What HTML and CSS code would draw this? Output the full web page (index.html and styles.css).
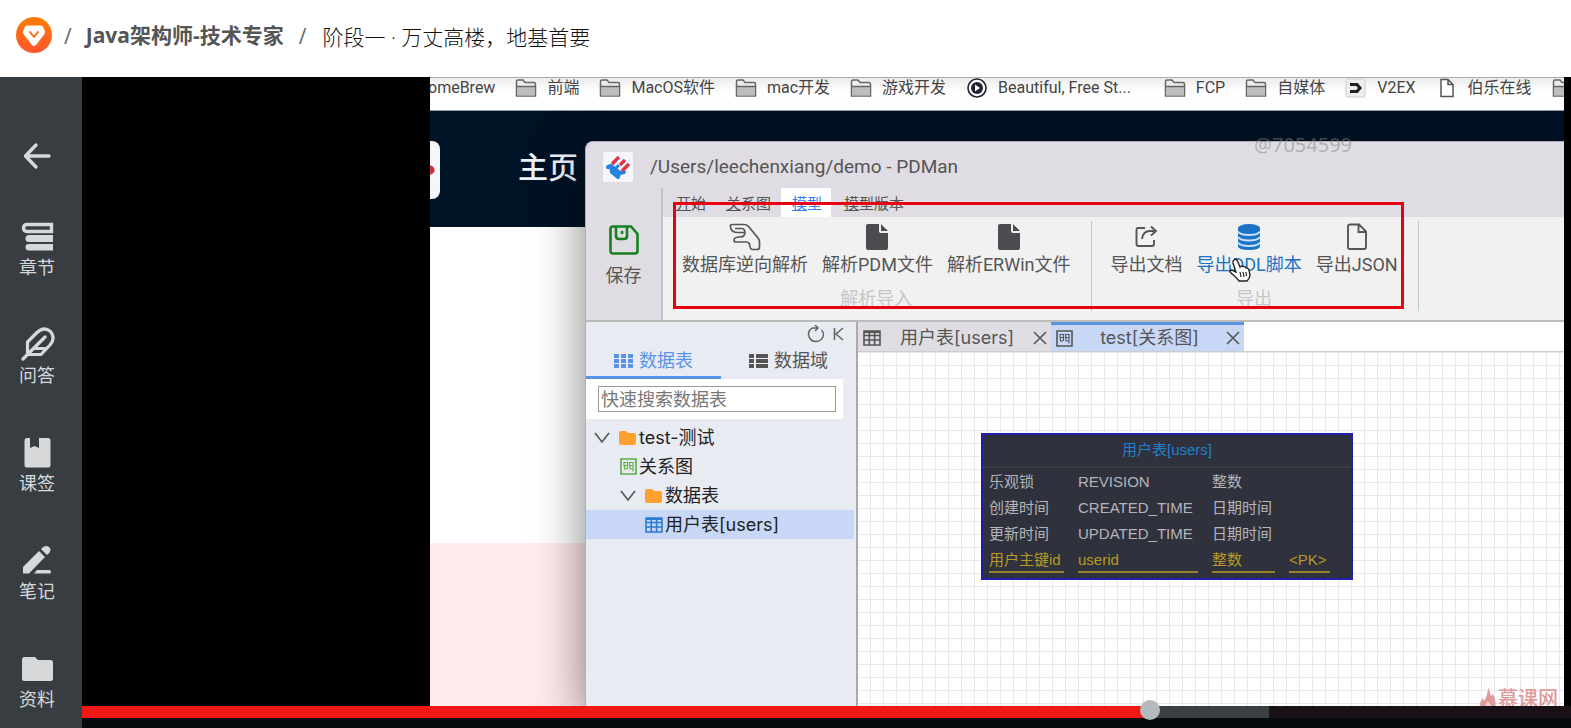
FILE: index.html
```html
<!DOCTYPE html>
<html lang="zh-CN">
<head>
<meta charset="utf-8">
<title>Java架构师-技术专家</title>
<link rel="stylesheet" href="styles.css">
</head>
<body>
<svg class="defs" width="0" height="0" aria-hidden="true">
  <symbol id="bm-folder" viewBox="0 0 22 20"><path d="M1.5 18V3.5Q1.5 2 3 2H8L10 4.5H19Q20.5 4.5 20.5 6V18Z" fill="#ececec" stroke="#666" stroke-width="1.5"/><path d="M2 8.5H20V17.500H2Z" fill="#bdbdbd"/><path d="M1.500 8.500H20.500" stroke="#666" stroke-width="1.500"/></symbol>
  <symbol id="doc-solid" viewBox="0 0 26 28"><path d="M2 3Q2 1 4 1H15V8Q15 10 17 10H24V25Q24 27 22 27H4Q2 27 2 25ZM17 1L24 8H17Z" fill="#4d4b4f"/></symbol>
  <symbol id="folder" viewBox="0 0 18 16"><path d="M0 3Q0 1 2 1H7L9 3H15Q17 3 17 5V13Q17 15 15 15H2Q0 15 0 13Z" fill="#ffa02f"/></symbol>
  <symbol id="chevron" viewBox="0 0 16 12"><path d="M1 1L8 10L15 1" fill="none" stroke="#555" stroke-width="1.600"/></symbol>
  <symbol id="close" viewBox="0 0 14 14"><path d="M1 1L13 13M13 1L1 13" fill="none" stroke="#555" stroke-width="1.600"/></symbol>
  <symbol id="table" viewBox="0 0 18 16"><path d="M1 1H17V15H1ZM1 5.500H17M1 10H17M6.300 1V15M11.600 1V15" fill="none" stroke="currentColor" stroke-width="1.600"/><path d="M1 1H17V3H1Z" fill="currentColor"/></symbol>
  <symbol id="diagram" viewBox="0 0 17 17"><path d="M1 1H16V16H1Z" fill="none" stroke="currentColor" stroke-width="1.600"/><path d="M4 4.500H7.500V7.500H4ZM9.500 4.500H13V7.500H9.500ZM4.500 8V11H7M7.500 8V11M10 8V11H13M13 8V13.500" fill="none" stroke="currentColor" stroke-width="1.100"/></symbol>
</svg>

<header class="course-bar">
  <a href="#" class="logo" aria-label="首页"><svg width="36" height="36" viewBox="0 0 36 36"><defs><linearGradient id="lg" x1="0" y1="0" x2="0" y2="1"><stop offset="0" stop-color="#ff7d00"/><stop offset="1" stop-color="#ff5530"/></linearGradient></defs><circle cx="18" cy="18" r="18" fill="url(#lg)"/><path d="M11 8.500H25Q26.500 8.500 27.200 10L28.800 14Q29.300 15.500 28.500 17L20 28Q18 30 16 28L7.500 17Q6.700 15.500 7.200 14L8.800 10Q9.500 8.500 11 8.500Z" fill="#fff"/><path d="M14 15L18 20L22 15" fill="none" stroke="#ff6a18" stroke-width="2" stroke-linecap="round" stroke-linejoin="round"/></svg></a>
  <span class="slash">/</span>
  <a href="#" class="course">Java架构师-技术专家</a>
  <span class="slash">/</span>
  <h1 class="stage-name">阶段一 · 万丈高楼，地基首要</h1>
</header>

<div class="player">
  <nav class="rail">
    <button class="rail-item back" aria-label="返回"><svg width="36" height="36" viewBox="0 0 36 36"><path d="M30 18H7M17 7L6.500 18L17 29" fill="none" stroke="currentColor" stroke-width="3.400" stroke-linecap="round" stroke-linejoin="round"/></svg></button>
    <button class="rail-item"><svg width="36" height="36" viewBox="0 0 36 36"><path d="M32.500 5.500H8Q4.500 5.500 4.500 9T8 12.500H32.500Z" fill="none" stroke="currentColor" stroke-width="3.400"/><path d="M10 16H34V23H10Q6.500 23 6.500 19.500T10 16ZM10 25H34V31.500H10Q6.500 31.500 6.500 28.200T10 25Z" fill="currentColor"/></svg>章节</button>
    <button class="rail-item"><svg width="36" height="36" viewBox="0 0 36 36"><path d="M4 32L26 10M8.500 28V15L18 5.500Q25 -1 31.500 4.500Q37 11 31 18L22 27.500H9M16 21.500H27" fill="none" stroke="currentColor" stroke-width="3.200" stroke-linecap="round" stroke-linejoin="round"/></svg>问答</button>
    <button class="rail-item"><svg width="36" height="36" viewBox="0 -2 36 36"><path d="M8 1H11V11L15.500 9L20 11V1H29Q31.500 1 31.500 3.500V28Q31.500 30.500 29 30.500H8Q5.500 30.500 5.500 28V3.500Q5.500 1 8 1Z" fill="currentColor"/></svg>课签</button>
    <button class="rail-item"><svg width="36" height="36" viewBox="0 -2 36 36"><path d="M4 22L20 6L26 12L10 28.500H4ZM22 4Q26 -1 30 2Q34 5 28 10ZM18 25H30Q32 25 32 27T30 28.500H15Z" fill="currentColor"/></svg>笔记</button>
    <button class="rail-item"><svg width="36" height="36" viewBox="0 -5 36 36"><path d="M5.500 1H16L19 4H31.500Q34 4 34 6.500V22.500Q34 25 31.500 25H5.500Q3 25 3 22.500V3.500Q3 1 5.500 1Z" fill="currentColor"/></svg>资料</button>
  </nav>

  <main class="screen">
    <div class="video">
      <div class="desktop">
        <div class="bookmarks">
          <span class="bm bm-first">omeBrew</span>
          <span class="bm"><svg width="22" height="20"><use href="#bm-folder"/></svg>前端</span>
          <span class="bm"><svg width="22" height="20"><use href="#bm-folder"/></svg>MacOS软件</span>
          <span class="bm"><svg width="22" height="20"><use href="#bm-folder"/></svg>mac开发</span>
          <span class="bm"><svg width="22" height="20"><use href="#bm-folder"/></svg>游戏开发</span>
          <span class="bm"><svg width="22" height="20" viewBox="0 0 22 20"><circle cx="11" cy="10" r="9" fill="#fff" stroke="#1d2235" stroke-width="1.600"/><circle cx="11" cy="10" r="6" fill="#1d2235"/><path d="M9 6.500L14 10L9 13.500Z" fill="#fff"/></svg>Beautiful, Free St...</span>
          <span class="bm bm-far"><svg width="22" height="20"><use href="#bm-folder"/></svg>FCP</span>
          <span class="bm"><svg width="22" height="20"><use href="#bm-folder"/></svg>自媒体</span>
          <span class="bm"><svg width="22" height="20" viewBox="0 0 22 20"><rect x="1" y="1" width="19" height="18" rx="2" fill="#eee" stroke="#ccc"/><path d="M5 6.500H12L15 10L12 13.500H5" fill="none" stroke="#222" stroke-width="3"/></svg>V2EX</span>
          <span class="bm"><svg width="22" height="20" viewBox="0 0 22 20"><path d="M5 1.500H12L17 6.500V18.500H5ZM12 1.500V6.500H17" fill="#fff" stroke="#555" stroke-width="1.500"/></svg>伯乐在线</span>
          <span class="bm"><svg width="22" height="20"><use href="#bm-folder"/></svg></span>
        </div>
        <div class="site-nav"><span class="site-card"></span><span class="site-home">主页</span></div>
        <div class="site-white"></div>
        <div class="site-pink"></div>
      </div>

      <section class="window">
        <header class="titlebar">
          <svg width="30" height="30" viewBox="0 0 30 30"><rect width="30" height="30" rx="2" fill="#f5f6fb"/><path d="M5 15L8 14L17 21L21 20M8 14L9 20L15 25L16 21M11 18L15 22" fill="none" stroke="#2482e0" stroke-width="4" stroke-linejoin="round" stroke-linecap="round"/><path d="M9 12L16 5M19 19L26 12" stroke="#d93646" stroke-width="3.400"/><path d="M13 16L16 13" stroke="#2482e0" stroke-width="3"/><path d="M17 13L22 8" stroke="#d93646" stroke-width="3.400"/></svg>
          <span>/Users/leechenxiang/demo - PDMan</span>
        </header>
        <div class="ribbon">
          <button class="save"><svg width="30" height="30" viewBox="0 0 30 30"><path d="M4 1.500H22L28.500 9V26Q28.500 28.500 26 28.500H4Q1.500 28.500 1.500 26V4Q1.500 1.500 4 1.500ZM7 2V11Q7 14 10 14H15Q18 14 18 11V2M13 6V9" fill="none" stroke="#16801c" stroke-width="2.600"/></svg>保存</button>
          <div class="ribbon-main">
            <div class="ribbon-tabs">
              <button class="rtab"><u>开</u>始</button><button class="rtab"><u>关</u>系图</button><button class="rtab on"><u>模</u>型</button><button class="rtab"><u>模</u>型版本</button>
            </div>
            <div class="groups">
              <div class="group">
                <div class="tools">
                  <button class="tool"><svg width="32" height="28" viewBox="0 0 32 28"><path d="M3 1.500H15Q18 1.500 20 4L29 15Q30.500 17 30.500 19V24Q30.500 26.500 28 26.500H23Q21 26 20.500 21Q20 19 17 19H7Q5 19 5 17T7 14.500L13 13.500M15 9.500H8Q2 9 1.500 4Q1 1.500 3 1.500M6 5.500H13Q16 6 16 10Q15 14 12 14" fill="none" stroke="#555" stroke-width="1.700"/></svg>数据库逆向解析</button>
                  <button class="tool"><svg width="26" height="28"><use href="#doc-solid"/></svg>解析PDM文件</button>
                  <button class="tool"><svg width="26" height="28"><use href="#doc-solid"/></svg>解析ERWin文件</button>
                </div>
                <div class="group-name">解析导入</div>
              </div>
              <div class="group">
                <div class="tools">
                  <button class="tool"><svg width="26" height="28" viewBox="0 0 26 28"><path d="M11 5H4Q2.500 5 2.500 7V21Q2.500 23 4.500 23H18Q20 23 20 21V17M8 16Q9 8 16 8H20M17 3.500L22 8L17 12.500" fill="none" stroke="#555" stroke-width="1.900"/></svg>导出文档</button>
                  <button class="tool hot"><svg width="26" height="28" viewBox="0 0 26 28"><path d="M2 5V23Q2 27 13 27T24 23V5Z" fill="#1c73c4"/><ellipse cx="13" cy="5" rx="11" ry="4" fill="#1c73c4"/><path d="M2 8.500Q4 12 13 12T24 8.500M2 14Q4 17.500 13 17.500T24 14M2 19.500Q4 23 13 23T24 19.500" fill="none" stroke="#c5e0fa" stroke-width="1.800"/></svg>导出DDL脚本</button>
                  <button class="tool"><svg width="26" height="28" viewBox="0 0 26 28"><path d="M6 1.500H15L22 8.500V24Q22 26 20 26H6Q4 26 4 24V3.500Q4 1.500 6 1.500ZM14.500 2V9H21.500" fill="none" stroke="#555" stroke-width="1.900"/></svg>导出JSON</button>
                </div>
                <div class="group-name">导出</div>
              </div>
            </div>
          </div>
        </div>

        <div class="workspace">
          <aside class="explorer">
            <div class="explorer-actions">
              <svg width="18" height="18" viewBox="0 0 18 18"><path d="M5 3Q1 6 1.500 10Q3 16.500 9 16.500Q15.500 16 16.500 10Q16.500 7 14.500 5M5 3H10M8 0L11 3L8 6" fill="none" stroke="#666" stroke-width="1.500"/></svg>
              <svg width="12" height="14" viewBox="0 0 12 14"><path d="M1.500 1V13M10 1L3 7L10 13" fill="none" stroke="#666" stroke-width="1.600"/></svg>
            </div>
            <div class="explorer-tabs">
              <button class="etab on"><svg width="19" height="16" viewBox="0 0 19 16"><path d="M0 3H19M0 8H19M0 13H19" stroke="currentColor" stroke-width="3.800" stroke-dasharray="5 2"/></svg>数据表</button>
              <button class="etab"><svg width="19" height="16" viewBox="0 0 19 16"><path d="M0 3H5M7 3H19M0 8H5M7 8H19M0 13H5M7 13H19" stroke="currentColor" stroke-width="3.800"/></svg>数据域</button>
            </div>
            <div class="search"><input type="text" placeholder="快速搜索数据表" aria-label="快速搜索数据表"></div>
            <ul class="tree">
              <li class="node"><svg width="16" height="12"><use href="#chevron"/></svg><svg class="fold" width="18" height="16"><use href="#folder"/></svg>test-测试</li>
              <li class="node l2"><svg class="green" width="17" height="17"><use href="#diagram"/></svg>关系图</li>
              <li class="node l2"><svg width="16" height="12"><use href="#chevron"/></svg><svg class="fold" width="18" height="16"><use href="#folder"/></svg>数据表</li>
              <li class="node l3 selected"><svg class="blue" width="18" height="16"><use href="#table"/></svg>用户表[users]</li>
            </ul>
          </aside>

          <div class="editor">
            <div class="doc-tabs">
              <div class="doc-tab"><svg width="18" height="16"><use href="#table"/></svg><span>用户表[users]</span><button class="x" aria-label="关闭"><svg width="14" height="14"><use href="#close"/></svg></button></div>
              <div class="doc-tab on"><svg width="17" height="17"><use href="#diagram"/></svg><span>test[关系图]</span><button class="x" aria-label="关闭"><svg width="14" height="14"><use href="#close"/></svg></button></div>
            </div>
            <div class="canvas">
              <table class="entity">
                <caption>用户表[users]</caption>
                <tr><td>乐观锁</td><td>REVISION</td><td>整数</td><td></td></tr>
                <tr><td>创建时间</td><td>CREATED_TIME</td><td>日期时间</td><td></td></tr>
                <tr><td>更新时间</td><td>UPDATED_TIME</td><td>日期时间</td><td></td></tr>
                <tr class="pk"><td><div>用户主键id</div></td><td><div>userid</div></td><td><div>整数</div></td><td><div>&lt;PK&gt;</div></td></tr>
              </table>
            </div>
          </div>
        </div>
      </section>

      <div class="highlight"></div>
      <svg class="hand" width="22" height="24" viewBox="0 0 22 24"><path d="M5 2Q7 0 8.500 3L11 9Q12 7.500 14 8.500Q16 8 17 10Q19 9.500 20 12L21 17Q21 20 18 23H10Q8 20 2 15Q0 12 3 12L7 14L4 5Q3.500 3 5 2Z" fill="#fff" stroke="#222" stroke-width="1.400"/><path d="M11 14L12 19M14 14L15 19M17 14L17.500 18" stroke="#222" stroke-width="1.200"/></svg>
      <span class="viewer-id">@7054599</span>
      <div class="brand"><svg width="16" height="24" viewBox="0 0 16 24"><path d="M8 0Q10 5 11 9L13 7Q17 15 15 20Q13 24 8 24Q1 24 0 17Q0 14 3 11L4 14Q8 8 8 0Z" fill="#e09a9a"/><path d="M8 24Q4 19 8 14Q9 17 11 18Q12 21 10 24Z" fill="#fff" opacity=".6"/></svg>慕课网</div>
    </div>
    <input class="progress" type="range" min="0" max="1000" value="720" aria-label="播放进度">
    <div class="controls"></div>
  </main>
</div>
</body>
</html>
```
FILE: styles.css
```css
* { box-sizing: border-box; }

body {
  margin: 0;
  min-height: 100vh;
  display: flex;
  flex-direction: column;
  background: #fff;
  font-family: "Open Sans", "Noto Sans CJK SC", sans-serif;
}

button {
  border: 0;
  padding: 0;
  background: none;
  font: inherit;
  color: inherit;
}

svg { display: block; flex: none; }
.defs { position: absolute; }

/* Course header */
.course-bar {
  display: flex;
  align-items: center;
  height: 77px;
  padding: 0 16px 8px;
  font-size: 21px;
  line-height: 28px;
}
.slash { padding: 2px 14px 0 12px; color: #666; }
.course { padding: 1px 3px 0 0; color: #555; font-weight: 700; text-decoration: none; }
.stage-name { margin: 0; padding: 4px 0 0 2px; font-size: 21px; font-weight: 300; color: #111; }

/* Player shell */
.player { flex: 1; display: flex; background: #000; }

.rail {
  flex: none;
  width: 82px;
  padding: 61px 8px 0 0;
  display: flex;
  flex-direction: column;
  align-items: center;
  gap: 48px;
  background: #383d41;
  color: #d6d8da;
  font-size: 18px;
  line-height: 24px;
}
.rail-item { display: flex; flex-direction: column; align-items: center; }
.back { margin-bottom: -3px; }

.screen { flex: 1; min-width: 0; display: flex; flex-direction: column; }
.video {
  position: relative;
  flex: 1;
  display: flex;
  margin: 0 7px 0 348px;
  overflow: hidden;
  font-family: Inter, "Noto Sans CJK SC", sans-serif;
}

/* Browser page behind the window */
.desktop { flex: 1; min-width: 0; display: flex; flex-direction: column; }
.bookmarks {
  display: flex;
  gap: 20px;
  height: 34px;
  overflow: hidden;
  background: linear-gradient(#ececec, #fff 14px);
  border-top: 1px solid #aaa;
  border-bottom: 1px solid #999;
  color: #444;
  font-family: Roboto, "Noto Sans CJK SC", sans-serif;
  font-size: 16px;
  line-height: 20px;
  white-space: nowrap;
}
.bm { flex: none; display: flex; gap: 10px; }
.bm-first { margin-left: -2px; }
.bm-far { margin-left: 13px; }
.site-nav { display: flex; align-items: flex-start; gap: 78px; height: 116px; padding-top: 30px; background: #001226; }
.site-card {
  width: 10px;
  height: 58px;
  border-radius: 0 8px 8px 0;
  background: radial-gradient(circle at 0 50%, #d03038 4px, #f5f6fb 5px);
}
.site-home { padding-top: 6px; font-size: 30px; line-height: 40px; font-weight: 500; color: #eef2fa; }
.site-white { height: 316px; background: #fff; }
.site-pink { flex: 1; background: #ffeaec; }

/* Modeller window, overlapping the page */
.window {
  position: absolute;
  top: 64px;
  right: 0;
  bottom: 0;
  left: 155px;
  display: flex;
  flex-direction: column;
  border: 1px solid #b4aeb8;
  border-width: 1px 0 0 1px;
  border-radius: 8px 0 0 0;
  background: #dfdde3;
  box-shadow: 0 16px 50px rgba(0, 0, 0, .5);
  color: #555;
  font-size: 18px;
  line-height: 24px;
}
.titlebar {
  display: flex;
  align-items: center;
  gap: 17px;
  height: 46px;
  padding: 3px 17px 0;
  font-family: Roboto, "Noto Sans CJK SC", sans-serif;
  font-size: 19px;
}

.ribbon { display: flex; height: 132px; font-family: Roboto, "Noto Sans CJK SC", sans-serif; }
.save {
  width: 77px;
  padding-top: 37px;
  display: flex;
  flex-direction: column;
  align-items: center;
  gap: 9px;
  border-right: 2px solid #c4c2c8;
}
.ribbon-main { flex: 1; display: flex; flex-direction: column; }
.ribbon-tabs { display: flex; height: 30px; font-size: 15px; }
.rtab { padding: 3px 10px 0; }
.rtab:nth-child(1) { padding-left: 13px; }
.rtab.on { padding: 3px 9px 0 11px; background: #fff; color: #2f80f0; }
.rtab:last-child { padding-left: 13px; }
.groups { flex: 1; display: flex; padding: 4px 0 9px; background: #f1f1f1; }
.group { display: flex; flex-direction: column; align-items: center; padding: 0 13px 0 12px; border-right: 1px solid #c4c4c4; }
.tools { display: flex; }
.tool { display: flex; flex-direction: column; align-items: center; gap: 2px; padding: 2px 7px 0; }
.tool.hot { color: #1c73c4; }
.group-name { margin-top: 10px; color: #c6c6c6; }

.workspace { flex: 1; display: flex; min-height: 0; border-top: 2px solid #bbb; }
.explorer { flex: none; width: 272px; border-right: 2px solid #aaa; background: #e8ebf2; }
.explorer-actions { display: flex; justify-content: flex-end; align-items: center; gap: 8px; height: 24px; padding-right: 11px; }
.explorer-tabs { display: flex; height: 33px; }
.etab { display: flex; flex: none; align-items: center; justify-content: center; gap: 6px; width: 135px; border-bottom: 3px solid transparent; }
.etab.on { border-color: #5894ea; color: #5894ea; }
.search { width: 257px; padding: 7px 7px 7px 12px; background: #fff; }
.search input {
  display: block;
  width: 100%;
  height: 26px;
  padding: 0 2px;
  border: 1px solid #999;
  background: #fff;
  font: inherit;
  color: #333;
}
.search input::placeholder { color: #777; }
.tree { margin: 0; padding: 4px 0 0; list-style: none; color: #222; }
.node { display: flex; align-items: center; gap: 2px; height: 29px; padding-left: 8px; }
.node .fold { margin-left: 7px; }
.l2 { padding-left: 34px; }
.l3 { padding-left: 59px; }
.selected { margin-right: 2px; background: #c8d7f5; }
.green { color: #5dae45; }
.blue { color: #2b7bd0; }

.editor { flex: 1; display: flex; flex-direction: column; min-width: 0; background: #fff; }
.doc-tabs { display: flex; height: 30px; border-bottom: 1px solid #ccc; }
.doc-tab {
  display: flex;
  align-items: center;
  width: 193px;
  padding: 0 4px 0 5px;
  border-top: 3px solid #dfdde3;
  background: #dfdde3;
}
.doc-tab.on { border-color: #5894e0; background: #c8d7f5; }
.doc-tab span { flex: 1; text-align: center; }
.canvas {
  flex: 1;
  padding: 81px 123px;
  background-color: #fff;
  background-image:
    linear-gradient(90deg, #e9e7ee 1px, transparent 1px),
    linear-gradient(#e9e7ee 1px, transparent 1px);
  background-position: 12px 13px;
  background-size: 13px 13px;
}
.entity {
  display: grid;
  grid-template-columns: auto;
  width: 372px;
  padding-bottom: 7px;
  border: 2px solid #2020a8;
  border-spacing: 0;
  background: #2f313d;
  color: #b4b5ba;
  font: 15px/20px "Liberation Sans", "Noto Sans CJK SC", sans-serif;
}
.entity caption { padding: 5px 0 6px; margin-bottom: 4px; border-bottom: 2px solid #3b3c46; color: #1f80cc; }
.entity tbody { display: grid; gap: 5px 14px; grid-template-columns: 75px 120px 63px 41px; padding: 0 6px; }
.entity tr { display: contents; }
.entity td { padding: 0; height: 21px; }
.entity .pk { color: #b99a24; }
.pk div { border-bottom: 2px solid #96802c; height: 23px; }

/* Overlays on the video */
.highlight {
  position: absolute;
  top: 125px;
  left: 243px;
  width: 731px;
  height: 107px;
  border: 3px solid #e60012;
}
.hand { position: absolute; top: 181px; left: 799px; }
.viewer-id {
  position: absolute;
  top: 56px;
  left: 824px;
  color: rgba(130, 130, 130, .5);
  font: 20px/24px "Noto Sans", sans-serif;
}
.brand {
  position: absolute;
  right: 6px;
  bottom: -5px;
  display: flex;
  align-items: center;
  gap: 2px;
  color: #e09a9a;
  font-size: 20px;
  font-weight: 500;
  line-height: 24px;
}

/* Playback progress */
.progress {
  position: relative;
  appearance: none;
  display: block;
  width: 100%;
  height: 12px;
  margin: 0;
  background: linear-gradient(90deg, #f11815 72%, #3b4043 72%, #3b4043 79.7%, #191116 79.7%);
}
.progress::-webkit-slider-runnable-track { height: 12px; }
.progress::-webkit-slider-thumb {
  appearance: none;
  width: 20px;
  height: 20px;
  margin-top: -6px;
  border-radius: 50%;
  background: #b3babe;
}
.controls { height: 10px; background: #050b0f; }
```
